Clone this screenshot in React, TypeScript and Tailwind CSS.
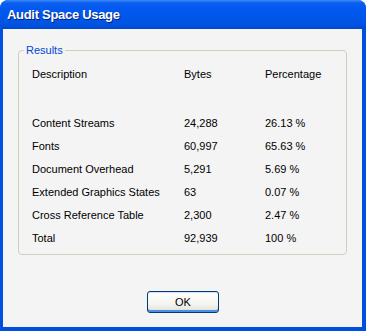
import React from "react";

const rows = [
  ["Content Streams", "24,288", "26.13 %"],
  ["Fonts", "60,997", "65.63 %"],
  ["Document Overhead", "5,291", "5.69 %"],
  ["Extended Graphics States", "63", "0.07 %"],
  ["Cross Reference Table", "2,300", "2.47 %"],
  ["Total", "92,939", "100 %"],
];

const App = () => {
  return (
    <div className="w-[366px] h-[331px] flex flex-col rounded-t-[8px] bg-[#0050e0] font-['Liberation_Sans',sans-serif] overflow-hidden">
      {/* title bar */}
      <div className="h-[29px] shrink-0 flex items-center pl-[7px] bg-[linear-gradient(to_bottom,#3d8cf7_0px,#0a5df0_3px,#0058ee_12px,#0054e3_24px,#0048d0_29px)] rounded-t-[8px]">
        <span className="text-white font-bold text-[13px] [text-shadow:1px_1px_0_#0a1f7a] tracking-[-0.3px]">
          Audit Space Usage
        </span>
      </div>

      {/* body */}
      <div className="flex-1 flex flex-col ml-[3px] mr-[4px] mb-[4px] bg-[#f4f4f4] px-[15px] pt-[15px]">
        <fieldset className="border border-[#d0d0bf] rounded-[4px] pl-[13px] pr-2 pb-[3px] h-[211px]">
          <legend className="text-[#0046d5] text-[11px] px-[2px] -ml-[8px] leading-[13px]">
            Results
          </legend>
          <div className="text-[11px] text-[#000] leading-[23px] mt-[6px]">
            <div className="grid grid-cols-[152px_81px_1fr] mb-[26px]">
              <span>Description</span>
              <span>Bytes</span>
              <span>Percentage</span>
            </div>
            {rows.map((r) => (
              <div key={r[0]} className="grid grid-cols-[152px_81px_1fr]">
                <span>{r[0]}</span>
                <span>{r[1]}</span>
                <span>{r[2]}</span>
              </div>
            ))}
          </div>
        </fieldset>

        <div className="flex justify-center mt-[36px]">
          <button className="w-[72px] h-[22px] rounded-[3px] border border-[#003c74] text-[11px] text-black bg-[linear-gradient(to_bottom,#ffffff_0%,#f4f4f0_60%,#e8e8e0_85%,#d6d0c4_100%)] shadow-[inset_0_-2px_0_#4d8ee8,inset_0_1px_0_#cfe0f8] ml-[1px]">
            OK
          </button>
        </div>
      </div>
    </div>
  );
};

export default App;
